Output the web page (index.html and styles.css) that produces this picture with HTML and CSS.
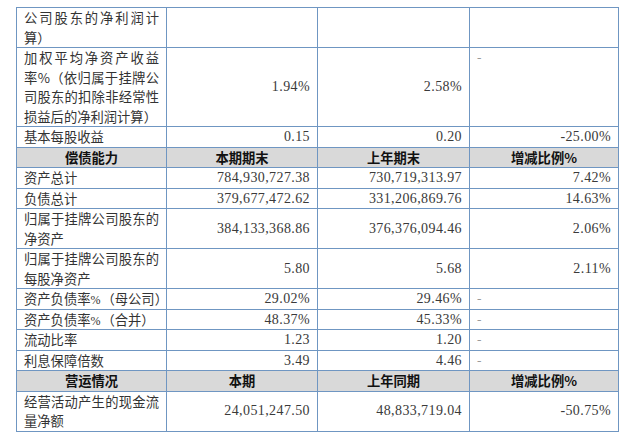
FILE: index.html
```html
<!DOCTYPE html>
<html lang="zh-CN">
<head>
<meta charset="utf-8">
<link rel="stylesheet" href="styles.css">
</head>
<body>
<table class="fin">
  <colgroup>
    <col class="c1"><col class="c2"><col class="c3"><col class="c4">
  </colgroup>
  <tbody>
    <tr>
      <td class="label">公司股东的净利润计算）</td>
      <td class="num"></td>
      <td class="num"></td>
      <td class="dash"></td>
    </tr>
    <tr>
      <td class="label">加权平均净资产收益率%（依归属于挂牌公司股东的扣除非经常性损益后的净利润计算）</td>
      <td class="num">1.94%</td>
      <td class="num">2.58%</td>
      <td class="dash top">-</td>
    </tr>
    <tr>
      <td class="label">基本每股收益</td>
      <td class="num">0.15</td>
      <td class="num">0.20</td>
      <td class="num">-25.00%</td>
    </tr>
    <tr class="head">
      <th>偿债能力</th>
      <th>本期期末</th>
      <th>上年期末</th>
      <th>增减比例%</th>
    </tr>
    <tr>
      <td class="label">资产总计</td>
      <td class="num">784,930,727.38</td>
      <td class="num">730,719,313.97</td>
      <td class="num">7.42%</td>
    </tr>
    <tr>
      <td class="label">负债总计</td>
      <td class="num">379,677,472.62</td>
      <td class="num">331,206,869.76</td>
      <td class="num">14.63%</td>
    </tr>
    <tr>
      <td class="label">归属于挂牌公司股东的净资产</td>
      <td class="num">384,133,368.86</td>
      <td class="num">376,376,094.46</td>
      <td class="num">2.06%</td>
    </tr>
    <tr>
      <td class="label">归属于挂牌公司股东的每股净资产</td>
      <td class="num">5.80</td>
      <td class="num">5.68</td>
      <td class="num">2.11%</td>
    </tr>
    <tr>
      <td class="label nowrap">资产负债率<span class="pct">%</span>（母公司）</td>
      <td class="num">29.02%</td>
      <td class="num">29.46%</td>
      <td class="dash">-</td>
    </tr>
    <tr>
      <td class="label nowrap">资产负债率<span class="pct">%</span>（合并）</td>
      <td class="num">48.37%</td>
      <td class="num">45.33%</td>
      <td class="dash">-</td>
    </tr>
    <tr>
      <td class="label">流动比率</td>
      <td class="num">1.23</td>
      <td class="num">1.20</td>
      <td class="dash">-</td>
    </tr>
    <tr>
      <td class="label">利息保障倍数</td>
      <td class="num">3.49</td>
      <td class="num">4.46</td>
      <td class="dash">-</td>
    </tr>
    <tr class="head">
      <th>营运情况</th>
      <th>本期</th>
      <th>上年同期</th>
      <th>增减比例%</th>
    </tr>
    <tr>
      <td class="label">经营活动产生的现金流量净额</td>
      <td class="num">24,051,247.50</td>
      <td class="num">48,833,719.04</td>
      <td class="num">-50.75%</td>
    </tr>
  </tbody>
</table>
</body>
</html>
```

FILE: styles.css
```css
html, body {
  margin: 0;
  padding: 0;
  background: #ffffff;
}

body {
  padding: 7px 0 0 16px;
  font-family: "Noto Sans CJK SC", sans-serif;
  color: #3a3a3a;
}

.fin {
  border-collapse: collapse;
  table-layout: fixed;
  width: 602px;
}

.c1 { width: 150px; }
.c2 { width: 151px; }
.c3 { width: 152px; }
.c4 { width: 149px; }

.fin td,
.fin th {
  border: 1px solid #6f96c2;
  padding: 0 7px;
  font-size: 13.3px;
  line-height: 19.5px;
  height: 19.5px;
  vertical-align: middle;
  box-sizing: content-box;
}

.label {
  text-align: justify;
  text-justify: inter-character;
  font-family: "Noto Sans CJK SC", sans-serif;
  font-weight: 400;
  color: #333333;
}

.nowrap {
  white-space: nowrap;
  text-align: left;
}

.pct {
  font-family: "Liberation Serif", serif;
  font-size: 12px;
  line-height: 1;
  margin-right: 1px;
}

.num {
  text-align: right;
  font-family: "Liberation Serif", "Noto Sans CJK SC", serif;
  font-size: 14px !important;
  letter-spacing: 0.4px;
  color: #3a3a3a;
}

.dash {
  text-align: left;
  font-family: "Liberation Serif", serif;
  color: #9a9a9a;
}

.dash.top {
  vertical-align: top;
}

.head th {
  background: #d9d9d9;
  color: #111111;
  font-weight: 700;
  text-align: center;
  font-family: "Noto Sans CJK SC", sans-serif;
}
```
